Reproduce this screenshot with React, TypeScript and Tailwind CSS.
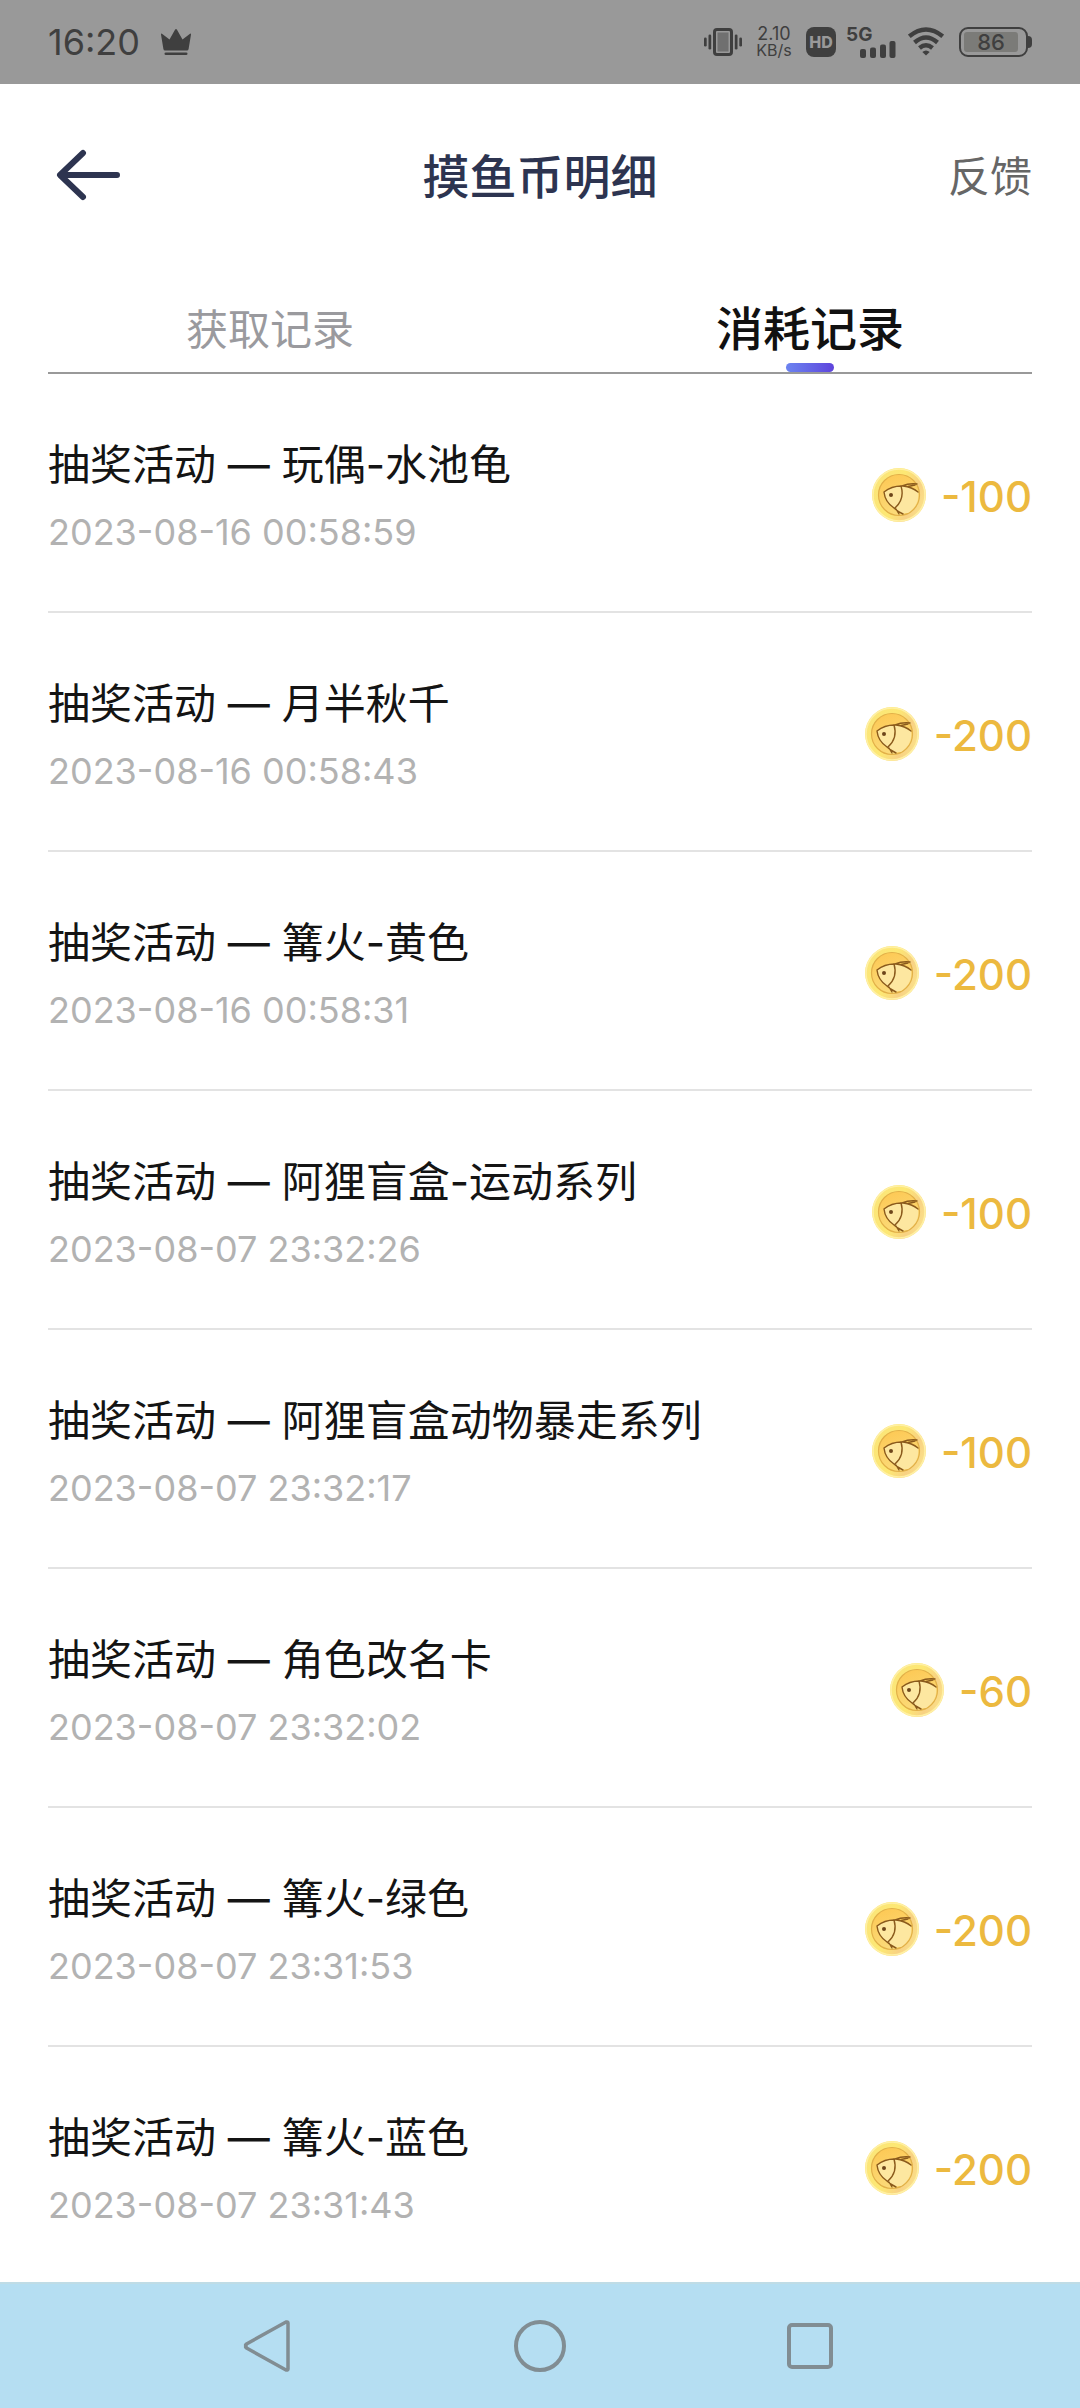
import { useState } from "react";

type RecordItem = {
  name: string;
  time: string;
  amount: number;
};

const records: RecordItem[] = [
  { name: "玩偶-水池龟", time: "2023-08-16 00:58:59", amount: -100 },
  { name: "月半秋千", time: "2023-08-16 00:58:43", amount: -200 },
  { name: "篝火-黄色", time: "2023-08-16 00:58:31", amount: -200 },
  { name: "阿狸盲盒-运动系列", time: "2023-08-07 23:32:26", amount: -100 },
  { name: "阿狸盲盒动物暴走系列", time: "2023-08-07 23:32:17", amount: -100 },
  { name: "角色改名卡", time: "2023-08-07 23:32:02", amount: -60 },
  { name: "篝火-绿色", time: "2023-08-07 23:31:53", amount: -200 },
  { name: "篝火-蓝色", time: "2023-08-07 23:31:43", amount: -200 },
];

function StatusBar() {
  return (
    <div className="flex h-[84px] items-center justify-between bg-[#999999] px-12 text-[#3f3f3f]">
      <div className="flex items-center gap-5">
        <span className="text-[36px] leading-[40px]">16:20</span>
        <svg className="h-[28px] w-[32px]" viewBox="0 0 32 28" fill="currentColor">
          <path d="M1 6.5 Q1 5 2.3 6 L9.5 11.5 L15 1.8 Q16 .3 17 1.8 L22.5 11.5 L29.7 6 Q31 5 31 6.5 L28.6 21 Q28.3 22.5 27 22.5 H5 Q3.7 22.5 3.4 21 Z" />
          <rect x="4.5" y="24.5" width="23" height="2.6" rx="1.3" />
        </svg>
      </div>
      <div className="flex items-center">
        <svg className="h-[30px] w-[38px]" viewBox="0 0 38 30" fill="currentColor">
          <rect x="0" y="10.5" width="2.7" height="9" rx="1.3" />
          <rect x="4.5" y="7.5" width="2.7" height="15" rx="1.3" />
          <rect x="10.5" y="2.5" width="17" height="25" rx="2.5" fill="none" stroke="currentColor" strokeWidth="3" />
          <rect x="13.5" y="5.5" width="11" height="19" fill="#707070" />
          <rect x="30.8" y="7.5" width="2.7" height="15" rx="1.3" />
          <rect x="35.3" y="10.5" width="2.7" height="9" rx="1.3" />
        </svg>
        <div className="ml-3 flex w-[40px] flex-col items-center text-[16px] leading-[16px]">
          <span className="text-[18px]">2.10</span>
          <span>KB/s</span>
        </div>
        <span className="ml-3 flex h-[30px] w-[30px] items-center justify-center rounded-lg bg-[#3f3f3f] text-[16px] font-extrabold text-[#999999]">
          HD
        </span>
        <div className="relative ml-[10px] h-[32px] w-[50px]">
          <span className="absolute left-0 top-0 text-[19px] font-bold leading-[18px]">5G</span>
          <svg className="absolute bottom-0 right-0 h-[17px] w-[36px]" viewBox="0 0 36 17" fill="currentColor">
            <rect x="0" y="8" width="6" height="9" rx="2" />
            <rect x="10" y="6.5" width="6" height="10.5" rx="2" />
            <rect x="20" y="3.5" width="6" height="13.5" rx="2" />
            <rect x="29.5" y="0" width="6" height="17" rx="2" />
          </svg>
        </div>
        <svg className="ml-3 h-[30px] w-[36px]" viewBox="0 0 36 30" fill="none" stroke="currentColor" strokeWidth="4.4">
          <path d="M1.3 9.3 Q18 -4.5 34.7 9.3" />
          <path d="M6.5 15.5 Q18 5.5 29.5 15.5" />
          <path d="M11.5 21 Q18 15.5 24.5 21" />
          <path d="M14.3 25 Q18 22 21.7 25 L18 28.5 Z" fill="currentColor" stroke="none" />
        </svg>
        <div className="ml-[15px] flex items-center">
          <div className="h-[30px] w-[69px] rounded-[9px] border-2 border-[#3f3f3f] p-[3px]">
            <div className="flex h-full w-[54px] items-center justify-center rounded-[3px] bg-[#7b7b78] text-[22px] font-medium">
              86
            </div>
          </div>
          <div className="h-[12px] w-[4px] rounded-r-full bg-[#3f3f3f]" />
        </div>
      </div>
    </div>
  );
}

function Coin() {
  return (
    <svg className="mb-1 h-[56px] w-[56px]" viewBox="0 0 56 56" fill="none">
      <defs>
        <linearGradient id="rim" x1="0" y1="0.3" x2="1" y2="0.7">
          <stop offset="0" stopColor="#fbe57a" />
          <stop offset="0.45" stopColor="#fde873" />
          <stop offset="0.75" stopColor="#f8d183" />
          <stop offset="1" stopColor="#fbe38a" />
        </linearGradient>
        <linearGradient id="face" x1="0.3" y1="0" x2="0.6" y2="1">
          <stop offset="0" stopColor="#fdc955" />
          <stop offset="1" stopColor="#fbdc7c" />
        </linearGradient>
      </defs>
      <circle cx="28" cy="28" r="27" fill="url(#rim)" />
      <circle cx="28" cy="28" r="26" stroke="#fff0a4" strokeWidth="1.5" />
      <circle cx="28" cy="28" r="20.5" fill="url(#face)" stroke="#e2b048" strokeWidth="1.2" />
      <path d="M13 25 Q20 19 30 19 Q41 20 47 25 Q49 38 37 46 L30 46 L23 41 Q15 35 13 25 Z" fill="#fde7a0" />
      <path
        d="M13 25 Q21 18.5 32 19 Q41 20 47 25 M13 25 Q14 35 23 41 Q26 44 32 47 M30 19 Q34 32 24 41 M31 19 Q38 16 46 17 M37 19.5 L44 18 M25 42 L28 47"
        stroke="#8a5a1c"
        strokeWidth="1.4"
        strokeLinecap="round"
      />
      <circle cx="20" cy="28" r="2" fill="#6d451a" />
    </svg>
  );
}

function RecordRow({ name, time, amount }: RecordItem) {
  return (
    <li className="flex items-center justify-between border-b-2 border-[#e3e3e3] pb-[52px] pt-[61px] last:border-b-0 last:pb-[50px]">
      <div>
        <h2 className="text-[42px] leading-[60px] text-[#141414]">抽奖活动 — {name}</h2>
        <time className="mt-[11px] mb-px block text-[36px] leading-[52px] text-[#b2b2b2]">{time}</time>
      </div>
      <div className="flex items-center gap-[14px]">
        <Coin />
        <span className="text-[42px] font-medium leading-[60px] text-[#ecb93f]">{amount}</span>
      </div>
    </li>
  );
}

function NavBar() {
  return (
    <nav className="grid h-[126px] grid-cols-[1fr_270px_1fr] items-center border-t-2 border-[#bfdce6] bg-[#b5def2] text-[#818d93]">
      <button aria-label="返回" className="justify-self-end pr-[114px]">
        <svg className="h-[54px] w-[48px]" viewBox="0 0 48 54" fill="none" stroke="currentColor" strokeWidth="3.5" strokeLinejoin="round">
          <path d="M3 27 Q2 26 3.5 25 L43 3 Q45 2.5 45 4 V50 Q45 51.5 43 51 L3.5 29 Q2 28 3 27 Z" />
        </svg>
      </button>
      <button aria-label="主页" className="justify-self-center">
        <div className="h-[52px] w-[52px] rounded-full border-4 border-[#818d93]" />
      </button>
      <button aria-label="最近任务" className="justify-self-start pl-[112px]">
        <div className="h-[46px] w-[46px] rounded-[5px] border-4 border-[#818d93]" />
      </button>
    </nav>
  );
}

export default function App() {
  const [tab, setTab] = useState("spend");
  const tabs = [
    { key: "earn", label: "获取记录" },
    { key: "spend", label: "消耗记录" },
  ];

  return (
    <div className="bg-white font-['Inter','Noto_Sans_CJK_SC',sans-serif]">
      <StatusBar />
      <header className="grid h-[186px] grid-cols-[1fr_auto_1fr] items-center px-12">
        <button aria-label="返回" className="justify-self-start pb-1 pl-2">
          <svg className="h-[52px] w-[66px]" viewBox="0 0 66 52" fill="none" stroke="#2d3450" strokeWidth="6" strokeLinecap="round" strokeLinejoin="round">
            <path d="M27 4 L4 26 L27 48 M5 26 H61" />
          </svg>
        </button>
        <h1 className="text-[47px] font-medium leading-[60px] text-[#2d3450]">摸鱼币明细</h1>
        <button className="justify-self-end text-[42px] leading-[60px] text-[#666666]">反馈</button>
      </header>
      <div className="mx-12 border-b-2 border-[#999999]">
        <div role="tablist" className="-mx-12 grid h-[102px] grid-cols-2">
          {tabs.map((item) => (
            <button
              key={item.key}
              role="tab"
              aria-selected={tab === item.key}
              onClick={() => setTab(item.key)}
              className={
                tab === item.key
                  ? "relative pt-4 text-[47px] font-medium text-[#111111]"
                  : "relative pt-4 text-[42px] text-[#9a9a9e]"
              }
            >
              {item.label}
              {tab === item.key && (
                <span className="absolute bottom-0 left-1/2 h-[9px] w-12 -translate-x-1/2 rounded-full bg-linear-to-r from-[#6c83f0] to-[#5e43dc]" />
              )}
            </button>
          ))}
        </div>
      </div>
      <ul className="px-12">
        {records.map((item) => (
          <RecordRow key={item.time} {...item} />
        ))}
      </ul>
      <NavBar />
    </div>
  );
}
